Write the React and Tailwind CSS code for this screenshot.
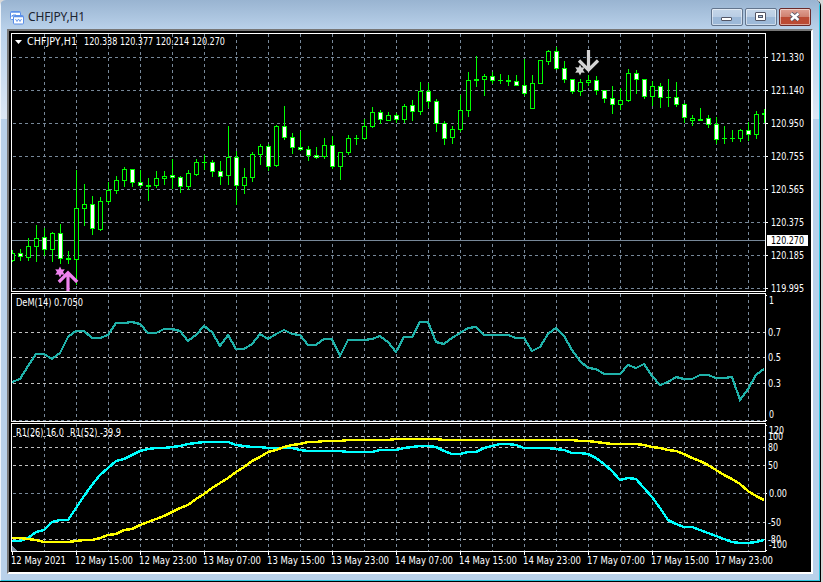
import clsx from 'clsx'

// [high, body top, body bottom, low, kind] - u: up, d: down, f: flat
const CANDLES = [
  [250, 253, 261, 262, 'u'], [249, 253, 257, 261, 'd'], [238, 246, 258, 261, 'u'], [225, 238, 247, 262, 'u'],
  [228, 237, 250, 256, 'd'], [232, 233, 250, 262, 'u'], [224, 233, 259, 264, 'd'], [251, 258, 260, 264, 'f'],
  [170, 208, 260, 285, 'u'], [184, 204, 209, 226, 'u'], [196, 204, 229, 235, 'd'], [197, 201, 230, 231, 'u'],
  [182, 190, 202, 204, 'u'], [176, 180, 191, 194, 'u'], [167, 169, 181, 187, 'u'], [169, 169, 183, 187, 'd'],
  [170, 182, 186, 188, 'd'], [178, 185, 187, 201, 'f'], [171, 178, 186, 188, 'u'], [171, 176, 179, 185, 'u'],
  [159, 175, 178, 189, 'd'], [176, 177, 187, 193, 'd'], [170, 173, 187, 190, 'u'], [159, 162, 175, 176, 'u'],
  [155, 162, 163, 170, 'f'], [160, 162, 172, 177, 'd'], [161, 171, 177, 185, 'd'], [126, 157, 176, 185, 'u'],
  [151, 157, 186, 205, 'd'], [168, 177, 186, 194, 'u'], [152, 154, 178, 182, 'u'], [144, 146, 155, 165, 'u'],
  [144, 146, 167, 171, 'd'], [125, 126, 166, 167, 'u'], [106, 126, 138, 140, 'd'], [133, 137, 148, 154, 'd'],
  [131, 147, 150, 151, 'd'], [146, 149, 156, 161, 'd'], [147, 155, 158, 159, 'd'], [138, 145, 157, 159, 'u'],
  [136, 145, 167, 169, 'd'], [152, 152, 167, 180, 'u'], [135, 138, 153, 155, 'u'], [135, 138, 139, 145, 'f'],
  [119, 126, 139, 140, 'u'], [107, 112, 127, 128, 'u'], [110, 112, 120, 124, 'd'], [112, 115, 121, 121, 'u'],
  [113, 115, 120, 123, 'd'], [104, 106, 120, 123, 'u'], [100, 105, 112, 121, 'd'], [82, 91, 112, 115, 'u'],
  [83, 91, 102, 108, 'd'], [99, 101, 124, 132, 'd'], [121, 123, 139, 145, 'd'], [126, 129, 138, 144, 'u'],
  [95, 110, 130, 132, 'u'], [72, 80, 111, 117, 'u'], [56, 79, 81, 87, 'f'], [74, 76, 80, 96, 'u'],
  [72, 76, 81, 84, 'd'], [74, 80, 81, 84, 'f'], [75, 80, 82, 86, 'f'], [75, 81, 86, 86, 'd'],
  [59, 85, 94, 96, 'd'], [75, 83, 109, 109, 'u'], [60, 60, 84, 84, 'u'], [50, 51, 62, 65, 'u'],
  [47, 51, 69, 70, 'd'], [61, 68, 80, 83, 'd'], [79, 79, 92, 94, 'd'], [79, 82, 92, 96, 'u'],
  [75, 80, 83, 86, 'u'], [76, 80, 91, 95, 'd'], [90, 90, 99, 103, 'd'], [86, 98, 105, 114, 'd'],
  [88, 100, 105, 110, 'u'], [69, 73, 101, 102, 'u'], [70, 73, 80, 94, 'd'], [79, 79, 97, 99, 'd'],
  [81, 86, 97, 106, 'u'], [83, 86, 98, 108, 'd'], [79, 97, 98, 107, 'f'], [82, 97, 105, 107, 'd'],
  [103, 104, 118, 123, 'd'], [115, 118, 121, 126, 'u'], [108, 119, 121, 121, 'f'], [115, 118, 125, 128, 'd'],
  [117, 124, 140, 144, 'd'], [126, 138, 139, 144, 'f'], [130, 138, 139, 142, 'f'], [129, 130, 139, 142, 'u'],
  [122, 130, 135, 141, 'd'], [111, 114, 135, 139, 'u'], [109, 113, 115, 123, 'f'],
]

const DEM = [
  382, 379, 366, 354, 354, 359, 353, 337, 331, 331, 338, 338, 335, 323, 323, 322, 324, 333, 333, 329, 329, 331, 341,
  335, 326, 332, 346, 335, 349, 349, 344, 334, 339, 334, 330, 334, 335, 345, 345, 339, 339, 356, 340, 340, 340, 339,
  336, 342, 352, 337, 337, 322, 322, 342, 344, 338, 333, 328, 327, 335, 335, 335, 335, 338, 338, 351, 347, 334, 328,
  336, 350, 361, 368, 369, 374, 374, 374, 365, 368, 364, 376, 385, 382, 377, 379, 379, 375, 375, 378, 378, 377, 400,
  389, 375, 369,
]

const R26 = [
  541, 541, 538, 532, 530, 522, 520, 520, 508, 496, 485, 475, 468, 461, 459, 455, 451, 449, 448, 448, 447, 446, 444,
  443, 442, 442, 442, 442, 445, 446, 447, 447, 448, 448, 448, 448, 450, 451, 451, 451, 451, 451, 452, 452, 452, 452,
  450, 450, 450, 448, 447, 446, 446, 447, 451, 454, 454, 452, 452, 448, 446, 444, 444, 445, 448, 448, 448, 448, 449,
  450, 453, 453, 454, 458, 464, 471, 480, 478, 479, 488, 497, 508, 520, 524, 527, 527, 530, 533, 536, 539, 542, 543,
  543, 542, 540,
]

const R52 = [
  538, 538, 539, 540, 542, 542, 542, 542, 541, 540, 540, 538, 535, 534, 530, 529, 525, 522, 519, 516, 512, 508, 505,
  499, 494, 488, 483, 478, 472, 467, 461, 457, 452, 450, 447, 445, 444, 442, 442, 441, 441, 441, 440, 440, 440, 440,
  440, 440, 439, 439, 439, 439, 439, 439, 440, 440, 440, 440, 440, 440, 440, 440, 440, 440, 440, 440, 440, 440, 440,
  440, 440, 441, 441, 442, 443, 444, 444, 444, 444, 445, 447, 448, 450, 451, 454, 458, 461, 465, 470, 475, 479, 484,
  491, 496, 500,
]

const PRICES = ['121.330', '121.140', '120.950', '120.755', '120.565', '120.375', '120.185', '119.995']
const TIMES = [
  '12 May 2021', '12 May 15:00', '12 May 23:00', '13 May 07:00', '13 May 15:00', '13 May 23:00',
  '14 May 07:00', '14 May 15:00', '14 May 23:00', '17 May 07:00', '17 May 15:00', '17 May 23:00',
]
const COLS = Array.from({ length: 23 }, (_, i) => 44 + 32 * i)
const PANES = [[33, 291], [293, 421], [423, 551]]
const LEVELS = [332, 357, 383, 436, 447, 465, 522, 539]

const toPoints = (values) => values.map((y, i) => `${12 + i * 8},${y}`).join(' ')

function Label({ x, y, w, dark, children }) {
  return (
    <text
      x={x}
      y={y}
      textLength={w}
      lengthAdjust="spacingAndGlyphs"
      className={clsx("font-['DejaVu_Sans_Condensed','DejaVu_Sans',sans-serif] text-[10.5px]", dark ? 'fill-black' : 'fill-white')}
      xmlSpace="preserve"
    >
      {children}
    </text>
  )
}

function Candle({ x, data }) {
  const [high, top, bottom, low, kind] = data
  return (
    <g>
      <rect x={x} y={high} width="1" height={low - high} fill="#00ff00" />
      <rect x={x - 2} y={top} width="5" height={bottom - top} fill="#00ff00" />
      {kind !== 'f' && (
        <rect x={x - 1} y={top + 1} width="3" height={Math.max(bottom - top - 2, 1)} fill={kind === 'd' ? '#fff' : '#000'} />
      )}
    </g>
  )
}

function Grid() {
  return (
    <g stroke="#778899" strokeWidth="1" strokeDasharray="3 3" fill="none">
      {PANES.map(([top, bottom]) => COLS.map(x => (
        <path key={`${top}-${x}`} d={`M${x + 0.5} ${top + 1}V${bottom}`} />
      )))}
      {PRICES.map((p, i) => <path key={p} d={`M13 ${57.5 + 33 * i}H765`} />)}
      <path d="M13 420.5H765M13 493.5H765" />
      {LEVELS.map(y => <path key={y} d={`M13 ${y + 0.5}H765`} stroke="#c0c0c0" />)}
    </g>
  )
}

function Star({ x, y, color }) {
  return (
    <path
      transform={`translate(${x} ${y})`}
      fill={color}
      d="M0 -5.5L1.5 -2.6L4.8 -2.8L3 0L4.8 2.8L1.5 2.6L0 5.5L-1.5 2.6L-4.8 2.8L-3 0L-4.8 -2.8L-1.5 -2.6Z"
    />
  )
}

function Chart() {
  return (
    <svg width="802" height="541" viewBox="9 31 802 541" className="block bg-black">
      <g shapeRendering="crispEdges">
        <Grid />
        <path d="M12 240.5H765" stroke="#778899" />
        {CANDLES.map((c, i) => <Candle key={i} x={12 + i * 8} data={c} />)}
      </g>

      <g fill="none" strokeWidth="2.4" shapeRendering="crispEdges">
        <polyline points={toPoints(DEM)} stroke="#20b2aa" strokeWidth="2.2" />
        <polyline points={toPoints(R26)} stroke="#00ffff" />
        <polyline points={toPoints(R52)} stroke="#ffff00" />
      </g>

      {/* buy / sell signals */}
      <path d="M68 291V273M58.8 282L68 272.8L77.2 282" fill="none" stroke="#ee82ee" strokeWidth="3.2" />
      <Star x={60} y={272} color="#ee82ee" />
      <path d="M588.5 50V70M579 60.5L588.5 70L598 60.5" fill="none" stroke="#d3d3d3" strokeWidth="3.2" />
      <Star x={580} y={70} color="#d3d3d3" />

      <g shapeRendering="crispEdges">
        <rect x="9" y="33" width="2" height="539" fill="#000" />
        <rect x="766" y="31" width="45" height="541" fill="#000" />
        {PANES.map(([top, bottom]) => (
          <rect key={top} x="11.5" y={top + 0.5} width="754" height={bottom - top} fill="none" stroke="#fff" />
        ))}
        {PRICES.map((p, i) => <rect key={p} x="766" y={57 + 33 * i} width="2" height="1" fill="#fff" />)}
        {[295, 420, 425, 493, 550].map(y => <rect key={y} x="766" y={y} width="1" height="1" fill="#fff" />)}
        {TIMES.map((t, i) => <rect key={t} x={12 + 64 * i} y="552" width="1" height="3" fill="#fff" />)}
        <path d="M12 546L17 551H12Z" fill="#778899" />
        <rect x="767" y="235" width="41" height="11" fill="#fff" />
      </g>

      <path d="M15 40H22L18.5 44Z" fill="#fff" />
      <Label x={27} y={45} w={50}>CHFJPY,H1</Label>
      <Label x={84} y={45} w={141}>120.338 120.377 120.214 120.270</Label>
      <Label x={16} y={306} w={67}>DeM(14) 0.7050</Label>
      <Label x={16} y={436} w={48}>R1(26) 16.0</Label>
      <Label x={70} y={436} w={51}>R1(52) -39.9</Label>

      {PRICES.map((p, i) => <Label key={p} x={771} y={61 + 33 * i} w={33}>{p}</Label>)}
      <Label x={771} y={244} w={33} dark>120.270</Label>
      <Label x={769} y={304} w={5}>1</Label>
      <Label x={768} y={336} w={13}>0.7</Label>
      <Label x={768} y={361} w={13}>0.5</Label>
      <Label x={768} y={387} w={13}>0.3</Label>
      <Label x={769} y={418} w={5}>0</Label>
      <Label x={769} y={434} w={15}>120</Label>
      <Label x={768} y={440} w={15}>100</Label>
      <Label x={768} y={451} w={10}>80</Label>
      <Label x={768} y={469} w={10}>50</Label>
      <Label x={769} y={497} w={18}>0.00</Label>
      <Label x={768} y={526} w={13}>-50</Label>
      <Label x={768} y={543} w={13}>-80</Label>
      <Label x={769} y={548} w={18}>-100</Label>
      {TIMES.map((t, i) => <Label key={t} x={11 + 64 * i} y={564} w={i ? 58 : 55}>{t}</Label>)}
    </svg>
  )
}

function ChartIcon() {
  return (
    <svg width="14" height="15" viewBox="0 0 14 15" fill="none" stroke="#5b8fe8">
      <rect x="0.5" y="1.5" width="10" height="8" rx="1" fill="#fff" />
      <path d="M1 2H10" strokeWidth="1.5" />
      <path d="M2 7V5.5H3.5V4.5M5 4V6" />
      <rect x="3.5" y="5.5" width="10" height="8.5" rx="1" fill="#fff" />
      <path d="M4 6.5H13" strokeWidth="1.5" />
      <path d="M5.5 9L7 11.5L8.5 9L10 11.5L11.5 9" strokeWidth="0.9" />
    </svg>
  )
}

const CAPTION = 'h-[18px] w-8 rounded-xs border flex items-center justify-center shadow-[inset_0_0_0_1px_rgba(255,255,255,0.5)]'
const PLAIN = 'border-[#63758d] bg-linear-to-b from-[#c5d6e9] from-0% via-[#b9cde4] via-48% to-[#9db9d8] to-52%'

function TitleBar() {
  return (
    <div className="h-[29px] shrink-0 flex items-start bg-linear-to-b from-[#99b4d1] to-[#b9d1ea]">
      <div className="flex items-center gap-1 pl-[9px] pt-[9px]">
        <ChartIcon />
        <span className="font-['Noto_Sans',sans-serif] text-[12px] leading-4 tracking-[-0.15px] text-[#1c2430]">CHFJPY,H1</span>
      </div>
      <div className="ml-auto mt-2 mr-2 flex gap-[2px]">
        <div className={clsx(CAPTION, PLAIN)}>
          <svg width="12" height="10" viewBox="0 0 12 10">
            <rect x="0.5" y="5.5" width="10" height="3" rx="0.5" fill="#fff" stroke="#535666" />
          </svg>
        </div>
        <div className={clsx(CAPTION, PLAIN)}>
          <svg width="12" height="10" viewBox="0 0 12 10">
            <rect x="0.5" y="0.5" width="10" height="8" rx="0.5" fill="#fff" stroke="#535666" />
            <rect x="3.5" y="3.5" width="4" height="2" fill="#a9c3e0" stroke="#535666" />
          </svg>
        </div>
        <div className={clsx(CAPTION, 'border-[#6b2a2a] bg-linear-to-b from-[#e0a295] from-0% via-[#cf8170] via-48% to-[#bb4a33] to-52%')}>
          <svg width="12" height="10" viewBox="0 0 12 10">
            <path d="M2 1.5L9.5 8M9.5 1.5L2 8" stroke="#535666" strokeWidth="4.2" />
            <path d="M2 1.5L9.5 8M9.5 1.5L2 8" stroke="#fff" strokeWidth="2.4" />
          </svg>
        </div>
      </div>
    </div>
  )
}

export default function App() {
  return (
    <div className="w-[823px] h-[582px] overflow-hidden bg-[#d8d8d8] pr-[2px]">
      <div className="h-full border-r border-b border-black bg-black rounded-t-md overflow-hidden">
        <div className="h-full border-r border-b border-[#2fc6e0] border-l border-l-[#eef4fb] flex flex-col bg-[#b9d1ea]">
          <TitleBar />
          <div className="grow pl-[6px] pr-[6px] pb-[6px] bg-linear-to-b from-[#b9d1ea] from-0% via-[#dce7f5] via-[90px] to-[#b9d1ea] to-[90px]">
            <div className="h-full border-t-2 border-l-2 border-r-2 border-b-2 border-t-[#777] border-l-[#777] border-r-white border-b-white">
              <Chart />
            </div>
          </div>
        </div>
      </div>
    </div>
  )
}
